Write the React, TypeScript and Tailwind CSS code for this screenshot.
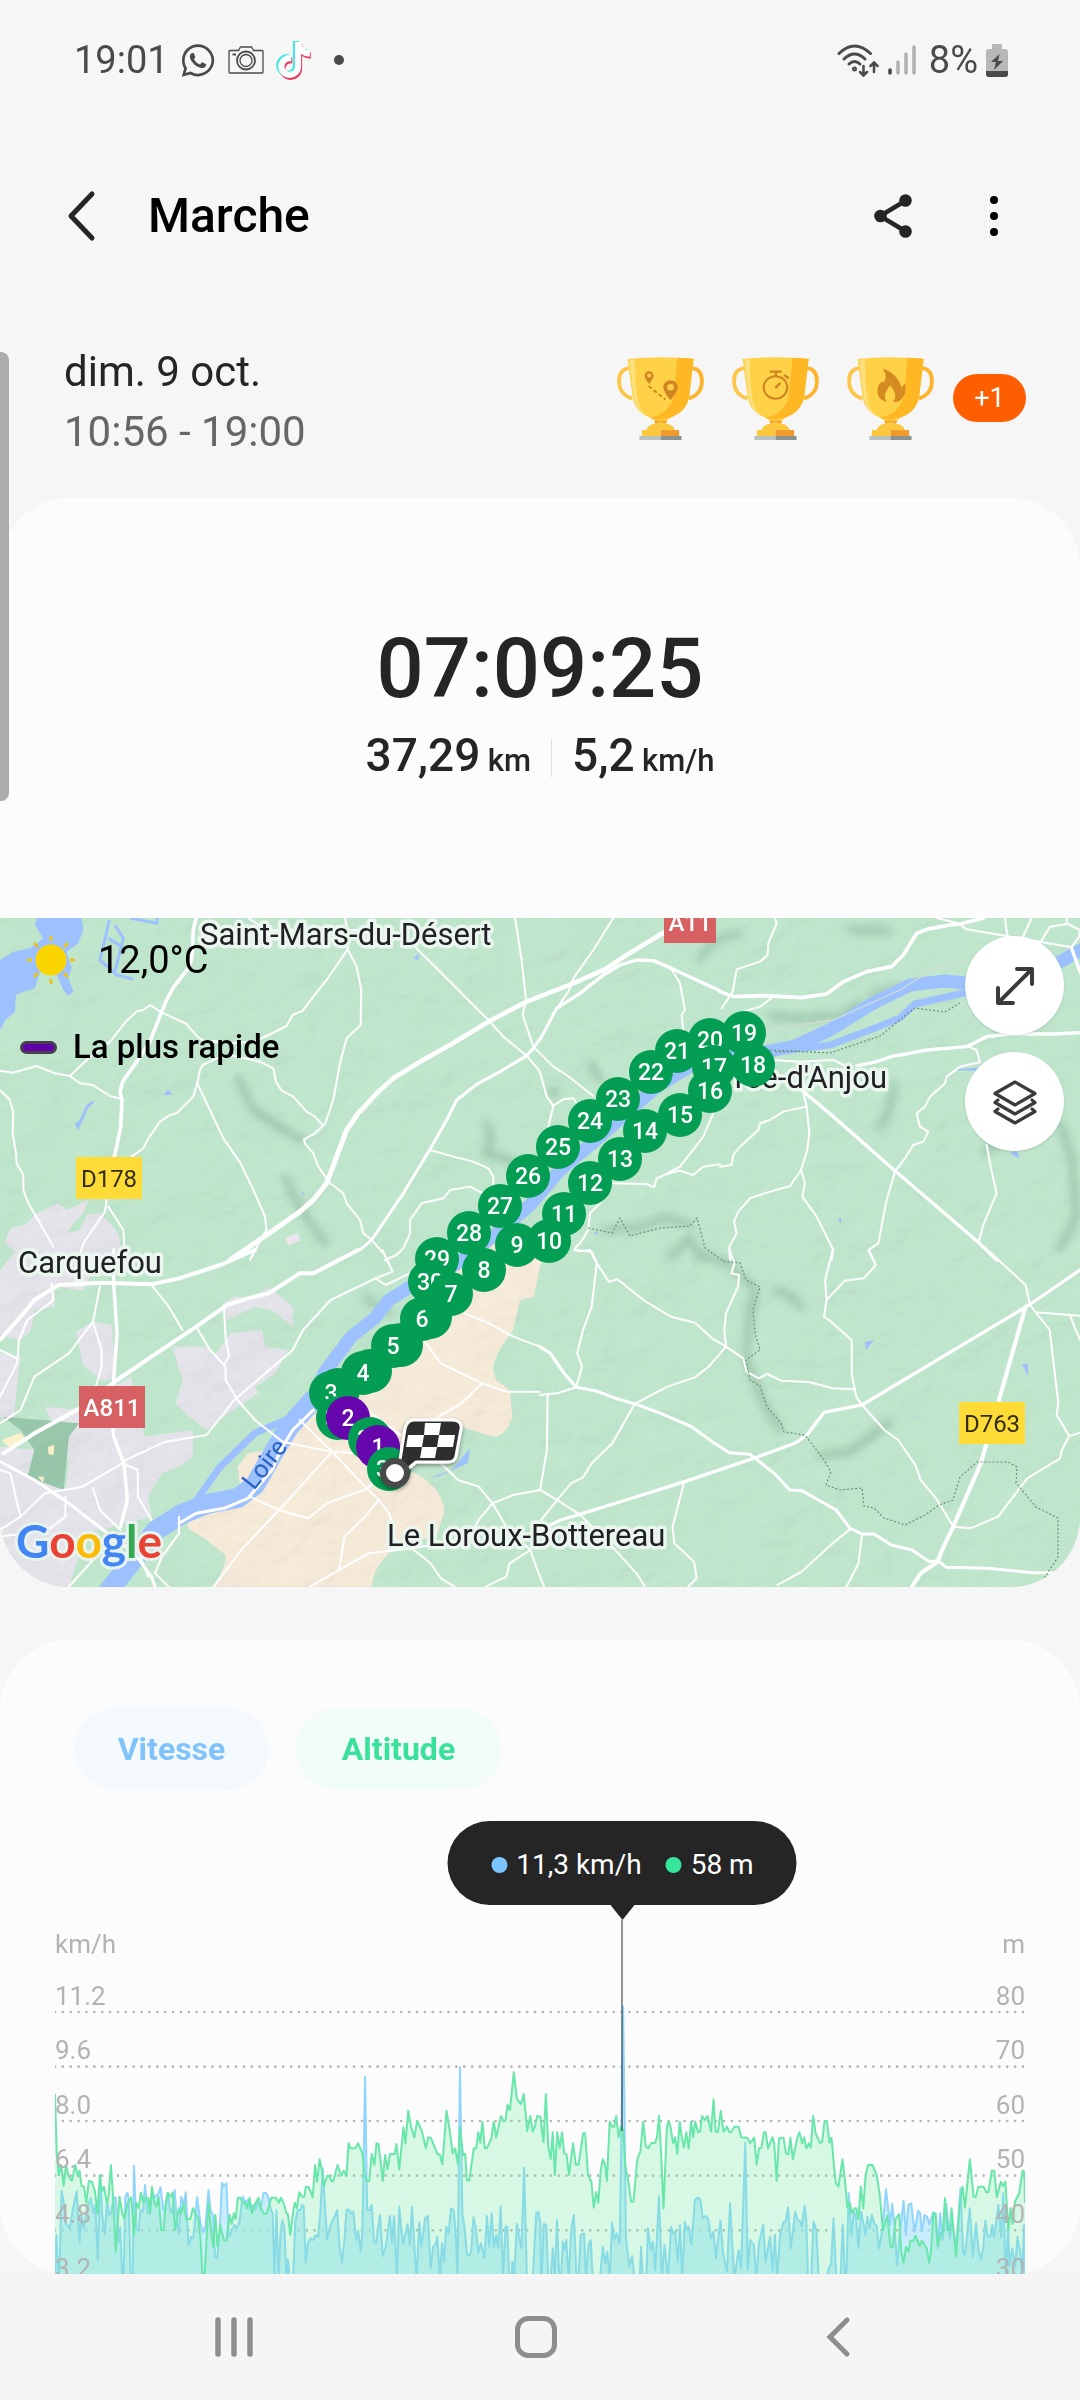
import type { ReactNode } from "react";
import { FaWhatsapp, FaTiktok } from "react-icons/fa";

type Marker = { label: string; x: number; y: number; fast?: boolean };

const markers: Marker[] = [
    { label: "19", x: 744, y: 115 },
    { label: "20", x: 710, y: 122 },
    { label: "21", x: 677, y: 133 },
    { label: "18", x: 753, y: 147 },
    { label: "17", x: 714, y: 149 },
    { label: "22", x: 651, y: 154 },
    { label: "16", x: 710, y: 173 },
    { label: "23", x: 618, y: 181 },
    { label: "15", x: 680, y: 197 },
    { label: "24", x: 590, y: 203 },
    { label: "14", x: 645, y: 213 },
    { label: "25", x: 558, y: 229 },
    { label: "13", x: 620, y: 241 },
    { label: "26", x: 528, y: 258 },
    { label: "12", x: 590, y: 265 },
    { label: "27", x: 500, y: 288 },
    { label: "11", x: 564, y: 296 },
    { label: "28", x: 469, y: 315 },
    { label: "10", x: 549, y: 323 },
    { label: "9", x: 517, y: 327 },
    { label: "29", x: 437, y: 341 },
    { label: "8", x: 484, y: 352 },
    { label: "30", x: 430, y: 364 },
    { label: "7", x: 451, y: 376 },
    { label: "", x: 430, y: 399 },
    { label: "6", x: 422, y: 401 },
    { label: "", x: 401, y: 427 },
    { label: "5", x: 393, y: 428 },
    { label: "", x: 370, y: 453 },
    { label: "4", x: 363, y: 455 },
    { label: "", x: 338, y: 472 },
    { label: "3", x: 331, y: 475 },
    { label: "35", x: 338, y: 500 },
    { label: "2", x: 348, y: 500, fast: true },
    { label: "36", x: 370, y: 521 },
    { label: "1", x: 378, y: 529, fast: true },
    { label: "37", x: 389, y: 551 },
];

// x,y samples of each half of the walk, in plot units
const HALF = 1568;

const altitudeFirst =
    "161,582 166,760 172,826 179,795 186,858 193,795 200,828 210,843 220,795 227,828 232,812 238,858 245,860 252,908 259,843 268,845 277,875 284,940 291,825 297,875 303,860 311,908 316,890 323,795 330,900 337,1055 348,890 356,940 362,957 372,908 382,892 390,1005 397,908 404,925 410,878 418,908 425,892 432,895 436,940 442,860 449,908 455,920 461,890 469,990 476,990 482,908 488,878 495,890 502,878 509,990 520,925 527,940 534,910 541,957 553,957 561,925 570,945 577,957 583,1020 588,1121 595,1121 606,908 613,990 620,1040 626,945 632,1040 640,975 650,1020 658,1022 667,945 673,972 680,940 685,957 691,893 698,893 706,910 712,908 718,925 725,893 732,940 742,910 751,893 760,930 767,942 775,940 788,893 802,893 810,908 816,893 824,910 832,940 836,942 843,1005 850,945 856,908 862,925 869,877 878,890 884,890 888,860 897,862 908,892 915,795 921,845 928,778 935,812 941,858 950,827 957,828 962,843 968,843 980,795 991,827 998,812 1006,827 1012,730 1018,745 1032,745 1040,730 1052,760 1059,828 1066,843 1072,843 1079,762 1087,795 1093,730 1099,732 1106,795 1111,843 1118,765 1125,808 1132,762 1146,762 1151,732 1159,808 1171,682 1177,730 1185,632 1193,680 1203,712 1211,662 1225,695 1236,745 1243,712 1250,713 1270,762 1277,765 1284,793 1296,632 1305,690 1314,760 1321,745 1329,793 1335,682 1344,765 1350,762 1355,840 1362,842 1375,745 1382,745 1388,697 1394,728 1400,665 1407,745 1413,745 1426,715 1433,665 1440,712 1454,648 1461,662 1467,662 1473,615 1480,630 1491,517 1500,597 1512,612 1520,582 1530,693 1539,648 1546,695 1552,680 1559,648";

const altitudeSecond =
    "0,650 9,727 16,582 23,740 30,777 36,697 42,825 49,697 56,743 63,697 69,760 76,763 83,825 95,730 103,795 111,793 124,700 130,700 138,825 148,845 155,923 162,876 168,908 175,812 181,778 188,795 193,843 201,665 208,680 214,680 220,648 227,712 233,680 240,690 246,795 256,850 263,905 270,905 281,778 290,755 298,665 306,740 313,745 320,730 333,728 338,712 344,648 350,760 357,925 367,680 372,663 378,685 385,730 391,712 397,762 404,665 410,712 416,743 423,697 430,745 437,665 443,712 449,665 457,697 463,695 469,648 477,660 485,648 495,695 502,598 508,695 515,695 523,632 531,695 541,680 548,697 555,695 562,680 575,680 582,712 600,713 608,730 620,713 627,793 634,745 641,743 648,697 653,697 660,745 673,712 678,730 685,843 692,715 705,713 712,760 719,763 725,713 732,778 745,713 751,697 759,730 765,712 771,745 778,730 784,743 791,648 798,700 811,730 817,725 824,663 831,663 838,728 844,713 851,795 857,850 864,860 876,778 883,840 890,923 897,908 903,940 911,925 916,925 922,957 929,860 936,925 943,825 950,795 963,795 975,825 984,885 993,990 1006,947 1015,1040 1022,1040 1030,957 1040,942 1046,1055 1053,1088 1060,1040 1067,1055 1073,1022 1082,1022 1087,1007 1100,1038 1106,1022 1120,1045 1127,1088 1133,1050 1139,942 1145,940 1152,1038 1160,1005 1167,990 1173,895 1180,990 1187,990 1192,925 1205,1070 1217,900 1224,860 1231,923 1245,778 1256,890 1262,892 1270,860 1285,860 1293,877 1299,876 1309,812 1316,812 1323,892 1335,845 1341,858 1348,845 1357,990 1363,925 1369,972 1376,905 1388,880 1398,812 1403,815 1405,908";

const speedFirst =
    "161,1121 165,1005 170,1118 174,1121 180,872 187,910 193,970 204,985 212,930 224,874 232,1027 238,945 244,985 256,915 265,895 273,940 278,915 285,1080 292,825 298,945 305,1003 312,900 318,945 324,940 330,895 337,892 345,1027 350,982 356,1135 360,1121 365,890 371,878 375,900 380,1135 386,1135 390,797 397,985 403,992 409,930 416,935 422,855 430,940 436,940 443,880 450,890 460,882 467,862 475,930 481,930 488,878 495,930 500,940 508,870 514,960 520,1000 527,890 534,915 540,877 548,1035 556,1010 562,1015 573,892 582,965 590,997 597,980 606,870 612,930 619,945 625,1070 631,1075 638,1000 645,848 651,858 658,850 663,980 667,1010 675,985 682,975 687,985 695,970 705,890 712,905 720,900 728,930 734,915 742,930 750,905 757,930 765,880 772,878 779,890 787,930 792,940 797,1135 803,930 809,1135 815,1000 820,960 826,985 832,1135 836,1078 842,1135 851,1135 858,960 865,930 873,930 877,915 882,920 888,1088 894,1030 902,1015 910,1020 917,1005 924,1010 930,940 937,805 945,940 950,1018 957,985 965,960 972,950 979,930 986,1040 993,1088 1000,1020 1006,930 1012,928 1020,940 1026,935 1034,1020 1040,992 1047,1055 1052,1000 1060,530 1066,930 1073,930 1079,915 1086,1025 1092,1030 1103,945 1111,1068 1120,1040 1132,948 1138,1030 1144,948 1152,1135 1159,920 1165,990 1171,1030 1183,973 1190,1035 1196,920 1203,1040 1209,1135 1217,967 1223,1040 1234,955 1242,948 1250,1105 1257,1040 1264,1035 1269,1010 1277,1135 1283,1028 1289,1085 1295,980 1302,1000 1309,925 1317,930 1323,1010 1328,1135 1335,502 1342,945 1348,980 1355,1060 1362,1068 1368,1050 1374,952 1381,985 1388,1058 1396,1030 1406,1075 1413,948 1420,1040 1427,940 1433,1040 1440,1005 1446,1045 1453,920 1460,1135 1467,980 1472,980 1478,1135 1484,1135 1487,1085 1492,1135 1500,972 1506,1010 1513,1045 1521,803 1529,1135 1546,1135 1556,940 1562,935";

const speedSecond =
    "0,970 2,1135 4,1135 10,972 17,975 23,1135 30,1135 36,1045 42,1135 48,960 55,1135 60,1135 65,1025 70,1050 75,1020 82,1135 90,985 97,945 105,1135 111,1135 117,1005 127,1000 132,1135 140,1035 146,1020 152,1135 173,1135 181,1040 188,1090 194,1055 201,1135 208,968 214,1020 221,1000 230,1030 236,640 240,320 244,640 248,1010 252,1050 258,1100 266,1068 273,1135 288,1135 292,1040 297,1135 307,1135 312,985 320,1050 326,1025 333,1110 344,888 352,1135 360,1035 370,1135 379,980 385,1000 391,995 398,1085 405,975 411,1135 419,965 425,990 430,980 438,1035 448,900 457,892 464,900 471,955 478,948 486,955 495,1015 502,995 509,1075 522,962 530,1060 541,1115 550,910 562,1135 575,1050 582,1105 594,727 601,1108 608,1020 619,1035 626,1135 634,1030 646,975 653,1085 666,1010 673,1112 680,1005 686,1135 695,1005 704,968 711,965 718,922 726,1045 739,935 746,960 754,965 758,980 766,918 771,960 776,1135 785,1135 792,965 800,990 807,1135 830,1135 836,1105 843,1090 850,955 858,1135 870,1135 877,975 883,1135 887,1135 894,880 902,1005 909,935 915,950 922,1045 930,935 943,1005 948,950 955,985 961,945 968,970 975,978 982,1045 992,985 1002,868 1014,975 1020,912 1027,980 1034,1095 1042,1000 1053,903 1060,1005 1067,915 1075,910 1085,995 1095,932 1101,940 1106,995 1114,945 1121,950 1128,972 1139,937 1146,940 1153,1045 1159,940 1166,1020 1177,912 1187,1015 1194,970 1205,1045 1218,865 1226,1060 1231,1065 1245,925 1254,1070 1263,970 1271,1055 1278,1078 1284,1040 1290,962 1297,1010 1305,1010 1310,975 1315,1012 1328,915 1336,1012 1342,880 1349,1135 1356,975 1360,1100 1368,1045 1377,1100 1383,1010 1392,1060 1397,1135 1402,975 1405,1121";

function joinHalves(first: string, second: string) {
    const shifted = second
        .split(" ")
        .map((pair) => {
            const [x, y] = pair.split(",").map(Number);
            return `${x + HALF},${y}`;
        })
        .join(" ");
    return `${first} ${shifted}`;
}

const altitudeLine = joinHalves(altitudeFirst, altitudeSecond);
const speedLine = joinHalves(speedFirst, speedSecond);

const ticks = [
    { speed: "11.2", altitude: "80" },
    { speed: "9.6", altitude: "70" },
    { speed: "8.0", altitude: "60" },
    { speed: "6.4", altitude: "50" },
    { speed: "4.8", altitude: "40" },
    { speed: "3.2", altitude: "30" },
];

function StatusBar() {
    return (
        <div className="flex h-[120px] items-center justify-between pl-[74px] pr-[72px] text-[38px] text-[#4a4a4a]">
            <div className="flex items-center">
                <span className="w-[106px]">19:01</span>
                <FaWhatsapp className="mr-3 h-[37px] w-[36px]" />
                <svg viewBox="0 0 36 28" className="mr-3 h-7 w-9" fill="none" stroke="currentColor" strokeWidth="1.3">
                    <path d="M1 5.500Q1 4.500 2 4.500H10.500L12.500 1H23.500L25.500 4.500H34Q35 4.500 35 5.500V26Q35 27 34 27H2Q1 27 1 26Z" />
                    <circle cx="18" cy="14.500" r="9" strokeWidth="1.8" />
                    <circle cx="18" cy="14.500" r="6" />
                    <path d="M4.500 8.500H8" strokeWidth="2" />
                </svg>
                <span className="relative mr-6 block h-[38px] w-[34px]">
                    <FaTiktok className="absolute left-0 top-0 h-9 w-8 text-[#3fe8e6]" />
                    <FaTiktok className="absolute left-[3px] top-[3px] h-9 w-8 text-[#e9385a]" />
                    <FaTiktok className="absolute left-[2px] top-px h-9 w-8 text-white" />
                </span>
                <span className="h-[10px] w-[10px] rounded-full bg-[#4a4a4a]" />
            </div>
            <div className="flex items-center">
                <svg viewBox="0 0 42 33" className="mr-2 h-[33px] w-[42px]" fill="none" stroke="currentColor" strokeWidth="3" strokeLinecap="round">
                    <path d="M2 9.500Q17.500-5.500 33.500 9.500" />
                    <path d="M7 15Q17.500 5 28 15" />
                    <path d="M12 20Q17.500 15 23 20" />
                    <circle cx="17.500" cy="25" r="1" />
                    <path d="M26.500 22V31M23 28L26.500 31.500L30 28M37 28V19M33.500 22L37 18.500L40.500 22" strokeWidth="2.500" />
                </svg>
                <svg viewBox="0 0 30 32" className="mr-3 h-8 w-[30px]" fill="none" strokeWidth="3.600" strokeLinecap="round">
                    <path d="M3 26V29" stroke="#4a4a4a" />
                    <path d="M11 18V29M19 10V29M27 3V29" stroke="#b2b2b2" />
                </svg>
                <span>8%</span>
                <svg viewBox="0 0 22 33" className="ml-2 h-[33px] w-[22px]">
                    <path d="M6 0H16V5H19Q22 5 22 8V30Q22 33 19 33H3Q0 33 0 30V8Q0 5 3 5H6Z" fill="#b8b8b8" />
                    <path d="M0 27H22V30Q22 33 19 33H3Q0 33 0 30Z" fill="#4a4a4a" />
                    <path d="M13.500 10L5 18H10L8 26L17 17H12Z" fill="#4a4a4a" />
                </svg>
            </div>
        </div>
    );
}

function Header() {
    return (
        <header className="flex h-[192px] items-center pl-[64px] pr-[68px]">
            <button type="button" aria-label="Retour" className="mr-[50px]">
                <svg viewBox="0 0 34 52" className="h-[52px] w-[34px]" fill="none" stroke="#252525" strokeWidth="5" strokeLinecap="round" strokeLinejoin="round">
                    <path d="M28 4L7 26L28 48" />
                </svg>
            </button>
            <h1 className="flex-1 text-[48px] leading-[56px] font-medium text-black">Marche</h1>
            <button type="button" aria-label="Partager" className="mr-[64px]">
                <svg viewBox="0 0 38 44" className="h-11 w-[38px]" fill="#252525">
                    <path d="M31 7L6 22L31 37" fill="none" stroke="#252525" strokeWidth="4.500" />
                    <circle cx="31.500" cy="6.500" r="6.300" />
                    <circle cx="6.500" cy="22" r="6.300" />
                    <circle cx="31.500" cy="37.500" r="6.300" />
                </svg>
            </button>
            <button type="button" aria-label="Plus d'options" className="flex w-9 flex-col items-center gap-2">
                <span className="h-2 w-2 rounded-full bg-black" />
                <span className="h-2 w-2 rounded-full bg-black" />
                <span className="h-2 w-2 rounded-full bg-black" />
            </button>
        </header>
    );
}

function Trophy({ children }: { children: ReactNode }) {
    return (
        <svg viewBox="0 0 252 250" preserveAspectRatio="none" className="h-[83px] w-[87px]">
            <path d="M38 33Q6 36 6 72Q6 112 44 125" fill="none" stroke="#fdc648" strokeWidth="11" />
            <path d="M216 33Q246 36 246 72Q246 112 208 125" fill="none" stroke="#fdb42c" strokeWidth="11" />
            <path d="M31 6Q127-5 222 6L210 110Q206 158 165 178Q143 188 141 200Q165 205 167 221H86Q88 205 112 200Q110 188 90 180Q48 160 44 112Z" fill="#fed147" />
            <path d="M175 2Q210 3 222 6L210 110Q206 158 165 178Q148 186 126 188Q105 187 95 182Q150 175 164 120Q168 90 175 2Z" fill="#ffb723" />
            <path d="M108 192H146L139 204Q126 196 112 204Z" fill="#f0a02c" />
            <path d="M112 200Q126 190 141 200Q165 205 167 221H86Q88 205 112 200Z" fill="#fdc740" />
            <path d="M36 8L52 8Q52 110 66 150Q72 165 84 175Q52 158 47 112Z" fill="#fee07e" />
            <path d="M72 220H126V238H72Z" fill="#fec83c" />
            <path d="M126 220H180V238H126Z" fill="#f19a2c" />
            <path d="M65 238H126V250H65Z" fill="#b9c2c1" />
            <path d="M126 238H187V250H126Z" fill="#8a938f" />
            {children}
        </svg>
    );
}

function Summary() {
    return (
        <section className="flex h-[176px] items-center justify-between pl-[64px] pr-[54px]">
            <div className="pt-1 text-[42px] leading-[60px]">
                <p className="text-[#252525]">dim. 9 oct.</p>
                <p className="text-[#666]">10:56 - 19:00</p>
            </div>
            <div className="flex items-center pb-1">
                <div className="flex gap-7">
                    <Trophy>
                        <path fillRule="evenodd" fill="#d08522" d="M93 43A13 13 0 0 1 106 56Q106 64 93 81Q80 64 80 56A13 13 0 0 1 93 43ZM93 50A6 6 0 1 0 93 62A6 6 0 1 0 93 50Z" />
                        <path fillRule="evenodd" fill="#d08522" d="M155 70A21 21 0 0 1 176 91Q174 106 155 130Q136 106 134 91A21 21 0 0 1 155 70ZM155 81A10 10 0 1 0 155 101A10 10 0 1 0 155 81Z" />
                        <path d="M92 88L140 128" fill="none" stroke="#c67d20" strokeWidth="5" strokeDasharray="11 8" />
                    </Trophy>
                    <Trophy>
                        <circle cx="126" cy="92" r="34" fill="none" stroke="#cf8423" strokeWidth="6" />
                        <path d="M109 44H144M127 46V58M125 94L140 78M151 54L164 64" fill="none" stroke="#cf8423" strokeWidth="7" />
                    </Trophy>
                    <Trophy>
                        <path d="M104 35Q148 52 157 92L168 80Q176 115 150 134L134 136Q150 115 125 86Q100 115 115 136Q86 126 88 100Q90 80 104 72V80Q120 62 104 35Z" fill="#d58a22" />
                    </Trophy>
                </div>
                <span className="ml-[19px] flex h-12 w-[73px] items-center justify-center rounded-full bg-[#ff5e00] text-[27px] text-white">+1</span>
            </div>
        </section>
    );
}

function Totals() {
    return (
        <section className="flex h-[420px] flex-col items-center rounded-t-[70px] bg-[#fcfcfc] pt-[121px] text-[#252525]">
            <p className="text-[83px] leading-[100px] font-medium">07:09:25</p>
            <div className="mt-2 flex items-center">
                <p className="text-[46px] leading-[56px] font-medium">
                    37,29 <span className="-ml-1 text-[31px]">km</span>
                </p>
                <span className="mx-5 h-[38px] w-px bg-[#dedede]" />
                <p className="text-[46px] leading-[56px] font-medium">
                    5,2 <span className="-ml-1 text-[31px]">km/h</span>
                </p>
            </div>
        </section>
    );
}

function Shield({ x, y, w, label, motorway }: { x: number; y: number; w: number; label: string; motorway?: boolean }) {
    return (
        <g>
            <rect x={x} y={y} width={w} height="42" fill={motorway ? "#d76063" : "#fedb37"} />
            <text x={x + w / 2} y={y + 30} textAnchor="middle" fontSize="24" fontWeight={motorway ? 500 : 400} fill={motorway ? "#fff" : "#332d0c"}>
                {label}
            </text>
        </g>
    );
}

function RouteMap() {
    return (
        <svg viewBox="0 0 1080 669" preserveAspectRatio="xMidYMid slice" className="h-full w-full" fontFamily="Roboto, sans-serif">
            <defs>
                <filter id="relief" x="0" y="0" width="100%" height="100%">
                    <feTurbulence type="fractalNoise" baseFrequency="0.018 0.024" numOctaves="4" seed="7" />
                    <feDiffuseLighting surfaceScale="4" lightingColor="#ffffff">
                        <feDistantLight azimuth="225" elevation="64" />
                    </feDiffuseLighting>
                </filter>
                <filter id="soft" x="-20%" y="-20%" width="140%" height="140%">
                    <feGaussianBlur stdDeviation="4" />
                </filter>
                <filter id="pinShadow" x="-50%" y="-50%" width="200%" height="200%">
                    <feDropShadow dx="0" dy="2" stdDeviation="2" floodOpacity="0.4" />
                </filter>
            </defs>
            <rect width="1080" height="669" fill="#c2e9cf" />

            {/* towns, parks and vineyards */}
            <g transform="translate(0 -18) scale(.3333)">
                <path fill="#e8e6ed" d="M15 1030L30 985L75 975L110 940L175 910L200 930L265 900L250 940L220 970L200 1000L240 990L260 945L300 940L330 970L355 1000L362 1040L300 1100L100 1100Z" />
                <path fill="#eceaf0" d="M855 1015L895 998L900 1022L865 1035Z" />
            </g>
            <g transform="translate(0 332) scale(.3444 .3333)">
                <g fill="#e8e6ed">
                    <path d="M0 60L50 0H300L290 70L262 80L240 122L160 108L158 170L100 180L90 240L60 270L0 255Z" />
                    <path d="M222 245L270 215L325 225L335 380L300 395L240 345Z" />
                    <path d="M0 310L60 320L50 400L40 500L0 505Z" />
                    <path d="M130 470L240 480L275 420L350 400L380 380L420 560L560 540L560 620L520 650L470 670L430 740L440 800L330 830L250 850L200 1010H150L60 960L0 900V590L100 600L80 680L190 720L200 640L170 560Z" />
                    <path d="M500 290L600 290L620 320L670 250L760 240L770 290L835 300L800 370L740 410L750 430L690 470L600 540L550 500L510 460L530 390Z" />
                    <path d="M650 160L680 140L740 140L780 110L850 170L850 230L790 180L740 170L660 210Z" />
                </g>
                <path fill="#99c9ac" d="M10 500L230 520L200 560L185 720L80 680L100 600L60 540Z" />
                <path fill="#fdf4cd" d="M5 570L60 548L75 570L30 597ZM140 590L158 585L155 615L140 612ZM110 680L128 680L125 698Z" />
                <path
                    fill="#f8ecdb"
                    d="M1400 -60L1640 -60Q1600 0 1570 40L1550 140L1510 150L1490 240Q1430 320 1432 360L1440 390L1480 420L1488 500Q1470 560 1430 560L1280 510L1270 590L1150 640L1230 685Q1290 730 1290 790L1270 850L1130 910Q1080 960 1080 1010H622Q660 940 655 915L600 870L545 835V800L620 770L700 740L690 650L720 610L830 590L870 520L920 480L1000 420L1200 200Z"
                />
            </g>

            <rect width="1080" height="669" filter="url(#relief)" className="opacity-30 mix-blend-multiply" />

            {/* valleys */}
            <g fill="none" stroke="#6f9a80" strokeWidth="6" strokeLinecap="round" strokeLinejoin="round" opacity=".5" filter="url(#soft)">
                <path d="M605 312L640 309L665 300L690 306M700 335L726 345L754 369L750 400L746 440L762 482L780 512" />
                <path d="M487 205L492 222L485 235L505 240L518 248M550 172L556 177M590 145L600 162" />
                <path d="M770 98L800 100L840 98L860 85M870 78L900 68M820 538L850 534L890 505" />
                <path d="M850 12L890 13M880 210L888 195L895 165M775 372L790 378L802 390" />
                <path d="M238 160L252 190L280 210L302 222M285 260L300 290L325 325" />
                <path d="M1060 205L1072 240L1076 300L1060 330M670 340L690 320L700 340M985 235L1020 205" />
                <path d="M700 40L715 22L740 15M390 395L365 380" />
            </g>

            {/* rivers and ponds */}
            <g fill="none" stroke="#9dc1fe" strokeLinejoin="round" strokeLinecap="round">
                <path strokeWidth="20" d="M100 684L130 646L156 612L182 596L207 586L238 580L255 567L275 532L289 509L313 482" />
                <path strokeWidth="13" d="M313 482L324 455L351 419L375 400L389 382L410 369L455 347L495 317L530 287L560 252L590 227L630 192L655 170L700 142L760 135L795 128L830 112L870 87L910 67L945 63L965 65L1040 55L1090 27" />
                <path strokeWidth="7" d="M193 587L220 549L255 515L293 499L305 485M790 132L830 127L870 112L900 100L915 86L964 75" />
            </g>
            <g transform="translate(0 -18) scale(.3333)">
                <path fill="#9dc1fe" d="M110 54H245L250 90L235 130L200 155L215 205L205 235L220 275L205 287L190 270L160 200L120 215L105 265L70 275L48 285L45 335L15 360L5 385H0V180L40 155L90 145L130 115L105 75ZM490 585L505 568L517 585ZM225 670L245 660L235 690ZM900 885L912 875L915 882Z" />
                <path fill="none" stroke="#9dc1fe" strokeWidth="9" d="M328 60L300 180L350 225L400 238M345 75L370 115L345 215M325 115L365 140M390 54L470 70L472 54M280 605L262 620L232 685" />
            </g>
            <path fill="#9dc1fe" d="M430 560L452 552L470 530L468 545L440 558ZM865 424L874 422L866 432ZM912 502L925 494L914 500ZM1022 446L1028 446L1028 458ZM868 431L876 423ZM950 152L985 149L983 153ZM413 40L419 36L418 42ZM1010 236L1016 232L1020 240ZM838 300L841 300L841 307ZM594 315L598 313L597 317Z" />

            {/* roads */}
            <g fill="none" stroke="#fff" strokeWidth="6" strokeLinejoin="round" strokeLinecap="round">
                <g transform="translate(0 -18) scale(.3333)">
                    <path strokeWidth="11" d="M588 54L580 90L578 130L575 175L565 205L520 262L500 300L485 335L450 425L400 500L368 545L360 575L366 600L362 680L350 740L343 770" />
                    <path d="M210 528L260 480L330 425L380 362L412 333L430 330L450 315L485 337L560 372L570 385L595 412L610 422L660 424" />
                    <path d="M0 512L40 518L110 498L165 520L210 528L240 550L280 556L330 588L368 598" />
                    <path d="M0 570L28 598L40 635L38 700L48 760L50 790L70 825L70 870L85 910L120 970L160 1040" />
                    <path d="M1043 148L980 240L940 290L908 332L878 345L860 378L800 408L760 425L690 430L610 422" />
                    <path d="M780 485L690 465L650 475L608 495L600 510L592 550L580 590L530 640L510 645L480 665L445 715L430 745L395 770" />
                    <path d="M592 550L630 630L670 715L722 790L765 880L795 950L800 990L790 1005L750 1080" />
                    <path d="M780 485L820 505L828 545L845 572L880 590L920 635L945 650L965 672" />
                    <path d="M1035 54L1045 100L1043 148L1070 200L1084 270L1082 375L1040 415L1020 490L1000 600L975 672L945 700L912 718L915 730L940 760L955 800L990 850L1030 880L1040 910L1080 960" />
                    <path strokeWidth="15" d="M1080 632L1040 690L1010 770L980 850L940 900L900 935L800 1005L690 1080" />
                    <path d="M320 900L315 935L250 1030L235 1080M325 920L370 990L375 1080M745 54L800 90L1080 90" />
                </g>
                <g transform="translate(360 -18) scale(.3333)">
                    <path d="M165 140L230 205L290 265L385 360L430 410L500 467L540 515L560 590L580 617L565 680" />
                    <path d="M465 54L485 180L498 300L488 345L520 440L580 500L620 525L700 588" />
                    <path d="M760 54L700 150L640 235L625 275L580 340" />
                    <path strokeWidth="9" d="M590 325L545 410L520 445L500 467L420 515L350 553L290 600L260 660L212 745L130 880L35 1020L0 1050" />
                    <path strokeWidth="14" d="M915 95L800 165L735 208L640 250L500 305L385 365L270 435L180 485L100 535L50 580L0 635" />
                    <path strokeWidth="10" d="M590 325L660 280L730 225L780 195L830 180L880 182L930 203L1080 272" />
                    <path d="M930 200L960 250L975 330L965 345L970 390M580 617L610 598L640 595L650 610" />
                    <path d="M212 750L280 770L340 785L385 805L400 830V860M365 878L330 860L270 870L250 895L185 910L150 960V1000L130 1045L110 1065L75 1080M0 960L10 1000L35 1020L70 1060" />
                    <path d="M1060 640L1030 710L960 800L920 822L890 835L882 862L860 852L760 850M920 822L960 812L1000 825L1030 800L1080 793" />
                    <path d="M740 890L690 940L685 990L660 1030L645 1045L655 1055L690 1050L705 1080" />
                </g>
                <g transform="translate(720 -18) scale(.3333)">
                    <path strokeWidth="11" d="M0 275L40 290L130 287L245 293L320 282L370 245L440 215L515 200L550 165L590 100L620 88L690 75L720 72L790 54" />
                    <path d="M650 54L715 70L740 88L860 108L1055 142M165 54L170 70L145 130L143 165L120 185L50 208L38 275L5 325M160 290L120 320L70 335" />
                    <path d="M855 54L862 108M935 54L910 108M1040 54V72L990 80L960 130M1040 70L1080 90L1078 110L1055 140" />
                    <path strokeWidth="10" d="M1055 145L1082 220M410 498L470 485L520 468L560 462L620 450L740 440L800 410L870 402H1000L1080 398" />
                    <path d="M160 480L240 485L340 480L370 495M745 440L770 450L780 487L720 500L680 530L675 550L630 590L615 620L590 640L600 680L625 695L610 725L580 735L555 775L525 815L500 900L475 1030L445 1050L460 1080" />
                    <path strokeWidth="10" d="M245 570L340 650L525 812L775 1027L830 1080" />
                    <path d="M250 580L260 620L268 700L262 750L243 810L255 850L247 890L290 950L340 1050L335 1080" />
                    <path d="M260 620L190 635L150 660L120 670L115 690L60 740L40 765L35 795L0 800M243 810L210 858L150 875L90 895L55 935L42 965L50 1000L28 1040L30 1080M800 735L812 800L830 880L790 975L775 1030" />
                    <path stroke="#cfdcd4" strokeWidth="4" d="M120 392L340 360L440 315L540 270L640 205L740 180" />
                </g>
                <g transform="translate(0 332) scale(.3444 .3333)">
                    <path strokeWidth="12" d="M0 270L60 200L100 150L170 105L300 98L440 103L520 85L640 45L740 0" />
                    <path strokeWidth="12" d="M10 610L100 550L240 470L340 390L440 320L570 230L660 165L720 145L780 130L870 70H910L1040 0" />
                    <path strokeWidth="10" d="M330 0V100L340 250L330 390L325 500L330 560L360 640L370 750L350 830" />
                    <path d="M440 105L490 170L530 240M570 230L610 300L655 350V390L690 450L740 510L820 575L960 605L1040 610M650 165L655 260L665 320L650 345" />
                    <path d="M150 100L155 150L80 210L55 270L50 340L0 440M290 110L270 215L200 310L100 380L60 480L0 520M270 215L295 300V350L270 440M0 300L50 325" />
                    <path d="M355 635L480 575L600 555L680 450L850 300L880 240L960 150L1090 85L1140 65L1110 0M1090 85L1120 105L1190 70" />
                    <path strokeWidth="9" d="M0 635L100 690L200 760L300 840L390 910L440 980L450 1010" />
                    <path d="M0 660L30 670L50 760L60 800L0 840M60 800L130 730L240 710L355 640L400 660V740L440 810M190 740V800L140 840L0 860M270 715L290 780L350 840" />
                    <path d="M200 1010L270 930L350 850L400 900L430 980M520 800V850L470 920L450 970L490 1010" />
                    <path strokeWidth="9" d="M910 480L850 540L820 590L790 660L720 745L650 775L570 790L520 820" />
                    <path d="M725 740L810 780L895 805L950 760L1000 740L1060 720L1180 620M620 1010L700 900L810 780L960 610" />
                    <path d="M870 510L960 600L1060 710L1100 750L1130 790L1140 830M1100 750L1060 800L1000 860L985 960M900 1010L985 960L1070 910L1200 895L1330 870" />
                    <path d="M1350 190L1420 220L1490 260L1568 290M1230 270L1280 340L1400 400L1470 425H1568M1400 400L1340 460L1240 520L1080 690M1050 470L1170 560" />
                    <path d="M1280 640L1330 690L1390 710L1430 760L1470 830L1540 900L1480 940L1470 980L1410 1010M1568 720L1490 735L1430 760L1390 810L1370 850M1190 890L1250 940L1280 985L1320 1010M1540 900L1560 960L1580 1010" />
                </g>
                <g transform="translate(540 332) scale(.3444 .3333)">
                    <path d="M100 0L150 5L165 40L150 170L125 240L108 310L122 350L105 410" />
                    <path d="M165 40L200 95L225 88L300 150L380 200L450 218L500 265L540 290L590 325L600 365L635 385L660 372L700 392L780 396L850 415L915 418" />
                    <path d="M550 0L565 40L555 70L578 75L575 110L540 190L535 240L540 290L490 350L450 382L370 410L275 462L210 580L150 640L125 682L90 700L50 750L0 815" />
                    <path strokeWidth="9" d="M0 290L30 310L70 370L105 412L160 422L220 445L280 463L350 490L440 530L500 575L550 608L610 613L680 670L725 720L760 722L860 780L900 835L935 852H970L1020 885L1080 900L1130 935L1155 932L1180 952L1300 955L1430 968L1490 968" />
                    <path d="M105 412L50 430L0 435M22 435L20 600L0 720L50 750L115 793L210 890L280 970L305 1010" />
                    <path strokeWidth="10" d="M0 840L60 810L115 793L250 750L420 695L620 625L740 580L775 555L825 487L935 465L1420 165L1568 60" />
                    <path d="M418 700L385 830L390 880L447 935L455 985L430 1010M850 0L828 90L832 150L825 200L845 215L905 270V370L918 440L935 465L1000 540L1040 570L1090 645L1105 690L1150 745L1200 830" />
                    <path d="M955 0L975 45L940 85L885 92L832 150M1300 0L1410 105L1423 165L1480 240L1505 460L1500 495L1537 558L1515 600L1510 625L1415 685L1330 800L1250 835L1200 830M1537 558L1568 548M1440 187L1568 197M1540 200L1568 270" />
                    <path strokeWidth="12" d="M1410 170L1330 460L1280 640L1200 830L1165 905L1155 935L1105 970L1080 1010" />
                    <path d="M900 838L850 880L760 965L690 1005M935 852L925 940L890 1010" />
                </g>
            </g>

            {/* administrative borders */}
            <g fill="none" stroke="#6d8f7b" strokeWidth="1.200" strokeDasharray="2 2">
                <path d="M588 310L612 315L620 300L630 318L660 310L690 308L697 300L705 330L722 342V343L740 345L746 362L760 369L753 392L755 415L760 432L746 442L750 462L760 468L767 489L781 505L784 514L805 517L824 542L831 554L826 567L840 572L862 570L864 588L874 590L884 600L905 607L925 597L939 587L953 582L960 559L977 544H1008L1017 549L1016 565L1036 589L1058 600V639L1043 662" />
                <path d="M770 132L830 135L880 118L915 90L945 94L960 85M775 134L800 133" />
            </g>

            {/* place names */}
            <g fontSize="31" fill="#202124" stroke="#eaf6ee" strokeWidth="7" strokeLinejoin="round" paintOrder="stroke">
                <text x="200" y="27">Saint-Mars-du-Désert</text>
                <text x="18" y="355">Carquefou</text>
                <text x="887" y="170" textAnchor="end">rée-d'Anjou</text>
                <text x="387" y="628">Le Loroux-Bottereau</text>
            </g>
            <text transform="translate(254 573) rotate(-52)" fontSize="25" fill="#2a61c4">Loire</text>
            <Shield x={76} y={239} w={66} label="D178" />
            <Shield x={79} y={468} w={66} label="A811" motorway />
            <Shield x={959} y={484} w={66} label="D763" />
            <Shield x={664} y={-17} w={52} label="A11" motorway />

            {/* kilometre markers, southern ones on top */}
            <g fontSize="23" fontWeight="500" textAnchor="middle">
                {markers.map((marker) => (
                    <g key={`${marker.x}-${marker.y}`}>
                        <circle cx={marker.x} cy={marker.y} r="22" fill={marker.fast ? "#6606ad" : "#039d53"} />
                        <text x={marker.x} y={marker.y + 8} fill="#fff">
                            {marker.label}
                        </text>
                    </g>
                ))}
            </g>
            <path d="M414 502H452Q462 502 461 511L456 538Q455 544 448 544H416L397 560L405 511Q407 502 414 502Z" fill="#2f2f2f" stroke="#fff" strokeWidth="3" strokeLinejoin="round" filter="url(#pinShadow)" />
            <path fill="#fff" d="M425 505H441L439 517H424ZM408 517H424L422 529H406ZM439 517H455L453 529H437ZM422 529H437L435 540H420Z" />
            <circle cx="395" cy="555" r="12" fill="#fff" stroke="#484848" strokeWidth="6" filter="url(#pinShadow)" />

            <text x="16" y="640" fontFamily="Lato, sans-serif" fontWeight="700" fontSize="46" stroke="#e9f3ee" strokeWidth="6" strokeLinejoin="round" paintOrder="stroke">
                <tspan fill="#4285f4">G</tspan>
                <tspan fill="#ea4335">o</tspan>
                <tspan fill="#fbbc05">o</tspan>
                <tspan fill="#4285f4">g</tspan>
                <tspan fill="#34a853">l</tspan>
                <tspan fill="#ea4335">e</tspan>
            </text>
        </svg>
    );
}

function MapPanel() {
    return (
        <section className="relative h-[669px] overflow-hidden rounded-b-[70px]">
            <RouteMap />
            <div className="absolute left-5 top-[18px] text-black">
                <div className="flex h-12 items-center">
                    <svg viewBox="0 0 52 52" className="h-[52px] w-[62px] shrink-0">
                        <circle cx="26" cy="26" r="15.500" fill="#fbd500" />
                        <path d="M26 2V7M26 45V50M2 26H7M45 26H50M9 9L13 13M39 39L43 43M9 43L13 39M39 13L43 9" stroke="#e9c31e" strokeWidth="3" />
                    </svg>
                    <span className="ml-4 text-[38px]">12,0°C</span>
                </div>
                <div className="mt-[39px] flex h-12 items-center">
                    <span className="h-[13px] w-[37px] rounded-full border-[3px] border-[#47404f] bg-[#6102a9]" />
                    <span className="ml-4 text-[33px] font-medium">La plus rapide</span>
                </div>
            </div>
            <div className="absolute right-4 top-[18px] flex flex-col gap-[17px]">
                <button type="button" aria-label="Agrandir la carte" className="flex h-[99px] w-[99px] items-center justify-center rounded-full bg-white shadow-sm">
                    <svg viewBox="0 0 40 40" className="h-10 w-10" fill="none" stroke="#3b3b3b" strokeWidth="4" strokeLinecap="round" strokeLinejoin="round">
                        <path d="M4 36L36 4M22 3H37V18M3 22V37H18" />
                    </svg>
                </button>
                <button type="button" aria-label="Type de carte" className="flex h-[99px] w-[99px] items-center justify-center rounded-full bg-white shadow-sm">
                    <svg viewBox="0 0 44 46" className="h-[46px] w-11" fill="none" stroke="#3b3b3b" strokeWidth="3.200" strokeLinecap="round" strokeLinejoin="round">
                        <path d="M22 3L42 14.500L22 26L2 14.500Z" />
                        <path d="M5 21L2 23.500L22 35L42 23.500L39 21M5 30L2 32.500L22 44L42 32.500L39 30" />
                    </svg>
                </button>
            </div>
        </section>
    );
}

function Chart() {
    return (
        <div className="relative mx-[55px] h-[484px] overflow-hidden text-[26px] leading-8 text-[#b3b3b3]">
            <svg viewBox="161 -330 2812 1452" preserveAspectRatio="none" className="absolute inset-0 h-full w-full" strokeWidth="2" strokeLinejoin="round">
                {[336, 500, 663, 827, 991].map((y) => (
                    <path key={y} d={`M161 ${y}H2973`} stroke="#b3b3b3" strokeWidth="2.600" strokeLinecap="round" strokeDasharray="0 7.870" vectorEffect="non-scaling-stroke" />
                ))}
                <polygon points={`161,1135 ${speedLine} 2973,1135`} fill="#a9e3fd" fillOpacity=".6" />
                <polyline points={speedLine} fill="none" stroke="#90d5fb" vectorEffect="non-scaling-stroke" />
                <polygon points={`161,1135 ${altitudeLine} 2973,1135`} fill="#74eeaa" fillOpacity=".28" />
                <polyline points={altitudeLine} fill="none" stroke="#69e7aa" vectorEffect="non-scaling-stroke" />
            </svg>
            <div className="relative flex justify-between pt-[138px]">
                <span>km/h</span>
                <span>m</span>
            </div>
            <ul className="relative mt-5 flex h-[304px] flex-col justify-between">
                {ticks.map((tick) => (
                    <li key={tick.speed} className="flex justify-between">
                        <span>{tick.speed}</span>
                        <span>{tick.altitude}</span>
                    </li>
                ))}
            </ul>
            <div className="absolute left-[58.5%] top-[31px] flex -translate-x-1/2 flex-col items-center">
                <div className="flex h-[84px] w-[349px] items-center justify-center gap-6 rounded-full bg-[#252525] pt-[3px] text-[28px] whitespace-nowrap text-white">
                    <span className="flex items-center gap-[9px]">
                        <i className="h-4 w-4 rounded-full bg-[#7cc4fe]" />
                        11,3 km/h
                    </span>
                    <span className="flex items-center gap-[9px]">
                        <i className="h-4 w-4 rounded-full bg-[#35e59c]" />
                        58 m
                    </span>
                </div>
                <svg viewBox="0 0 24 15" className="h-[15px] w-6" fill="#252525">
                    <path d="M0 0H24L12 15Z" />
                </svg>
                <span className="h-[211px] w-px bg-[#252525]" />
            </div>
        </div>
    );
}

function ChartCard() {
    return (
        <section className="mt-[53px] rounded-[70px] bg-[#fcfcfc] pt-[68px]">
            <div className="flex gap-[26px] px-[74px] text-[32px] font-bold">
                <button type="button" className="h-[82px] w-[195px] rounded-full bg-[#f4f9fd] text-[#80c3fb]">
                    Vitesse
                </button>
                <button type="button" className="h-[82px] w-[207px] rounded-full bg-[#f2fcf8] text-[#3ae19b]">
                    Altitude
                </button>
            </div>
            <Chart />
        </section>
    );
}

function NavigationBar() {
    return (
        <nav className="grid h-[126px] grid-cols-[1fr_66px_1fr] items-center bg-[#f5f5f5] pr-2 text-[#8e8e8e]">
            <button type="button" aria-label="Applications récentes" className="mr-[250px] justify-self-end">
                <svg viewBox="0 0 38 42" className="h-[42px] w-[38px]" fill="none" stroke="currentColor" strokeWidth="5.500" strokeLinecap="round">
                    <path d="M3 4V38M19 4V38M35 4V38" />
                </svg>
            </button>
            <button type="button" aria-label="Accueil" className="justify-self-center">
                <svg viewBox="0 0 42 42" className="h-[42px] w-[42px]" fill="none" stroke="currentColor" strokeWidth="5">
                    <rect x="2.500" y="2.500" width="37" height="37" rx="11" />
                </svg>
            </button>
            <button type="button" aria-label="Retour" className="ml-[256px] justify-self-start">
                <svg viewBox="0 0 26 42" className="h-[42px] w-[26px]" fill="none" stroke="currentColor" strokeWidth="5" strokeLinecap="round">
                    <path d="M22 4L5 21L22 38" />
                </svg>
            </button>
        </nav>
    );
}

export default function App() {
    return (
        <div className="relative min-h-screen overflow-hidden bg-[#f6f6f6] font-[Roboto,sans-serif]">
            <StatusBar />
            <Header />
            <Summary />
            <main className="mt-[10px]">
                <Totals />
                <MapPanel />
                <ChartCard />
            </main>
            <NavigationBar />
            {/* edge panel handle */}
            <div className="absolute left-0 top-[352px] h-[449px] w-[9px] rounded-r-lg bg-[#acacac]" />
        </div>
    );
}
